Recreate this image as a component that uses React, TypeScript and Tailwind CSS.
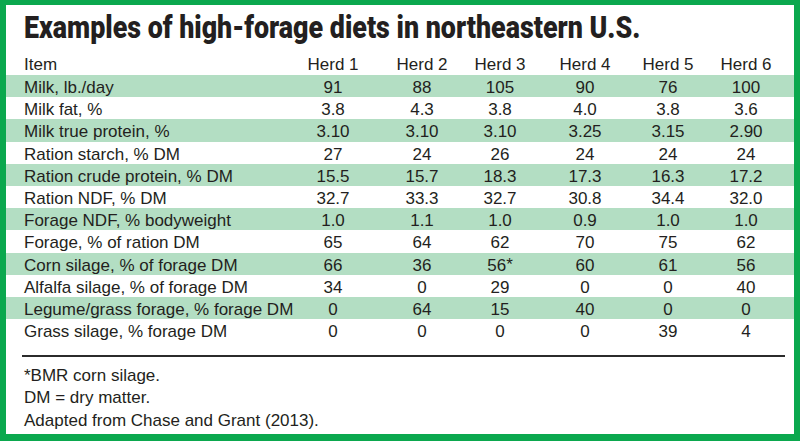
import React from "react";

const rows: [string, string[]][] = [
  ["Milk, lb./day", ["91", "88", "105", "90", "76", "100"]],
  ["Milk fat, %", ["3.8", "4.3", "3.8", "4.0", "3.8", "3.6"]],
  ["Milk true protein, %", ["3.10", "3.10", "3.10", "3.25", "3.15", "2.90"]],
  ["Ration starch, % DM", ["27", "24", "26", "24", "24", "24"]],
  ["Ration crude protein, % DM", ["15.5", "15.7", "18.3", "17.3", "16.3", "17.2"]],
  ["Ration NDF, % DM", ["32.7", "33.3", "32.7", "30.8", "34.4", "32.0"]],
  ["Forage NDF, % bodyweight", ["1.0", "1.1", "1.0", "0.9", "1.0", "1.0"]],
  ["Forage, % of ration DM", ["65", "64", "62", "70", "75", "62"]],
  ["Corn silage, % of forage DM", ["66", "36", "56*", "60", "61", "56"]],
  ["Alfalfa silage, % of forage DM", ["34", "0", "29", "0", "0", "40"]],
  ["Legume/grass forage, % forage DM", ["0", "64", "15", "40", "0", "0"]],
  ["Grass silage, % forage DM", ["0", "0", "0", "0", "39", "4"]],
];

const grid = "grid grid-cols-[284px_86px_92px_64px_106px_60px_96px]";

export default function App() {
  return (
    <div className="w-[800px] h-[441px] bg-white border-t-[5px] border-l-[6px] border-r-[6px] border-b-[7px] border-[#0ba84e] text-[#231f20] overflow-hidden">
      <div className="h-[47px] pl-[18px] pt-[5px] whitespace-nowrap">
        <span
          className="inline-block origin-left scale-x-[0.865] text-[31px] leading-[36px] font-black tracking-[0px]"
          style={{ fontFamily: 'Roboto, "DejaVu Sans", sans-serif' }}
        >
          Examples of high-forage diets in northeastern U.S.
        </span>
      </div>
      <div className="text-[17px]" style={{ fontFamily: '"Liberation Sans", Arial, sans-serif' }}>
        <div className={`${grid} h-[23px] items-center`}>
          <div className="pl-[18px]">Item</div>
          {["Herd 1", "Herd 2", "Herd 3", "Herd 4", "Herd 5", "Herd 6"].map((h) => (
            <div key={h} className="text-center">{h}</div>
          ))}
        </div>
        {rows.map(([label, vals], i) => (
          <div
            key={label}
            className={`${grid} h-[22.2px] items-center ${i % 2 === 0 ? "bg-[#b3dec3]" : "bg-white"}`}
          >
            <div className="pl-[18px] whitespace-nowrap">{label}</div>
            {vals.map((v, j) => (
              <div key={j} className="text-center">
                {v.endsWith("*") ? (
                  <span>
                    {v.slice(0, -1)}
                    <span className="relative -top-[1px]">*</span>
                  </span>
                ) : (
                  v
                )}
              </div>
            ))}
          </div>
        ))}
        <div className="ml-[16px] mr-[9px] mt-[14px] h-[1.5px] bg-[#2b2b2b]" />
        <div className="pl-[18px] pt-[8px] leading-[22.5px]">
          <div>*BMR corn silage.</div>
          <div>DM = dry matter.</div>
          <div>Adapted from Chase and Grant (2013).</div>
        </div>
      </div>
    </div>
  );
}
